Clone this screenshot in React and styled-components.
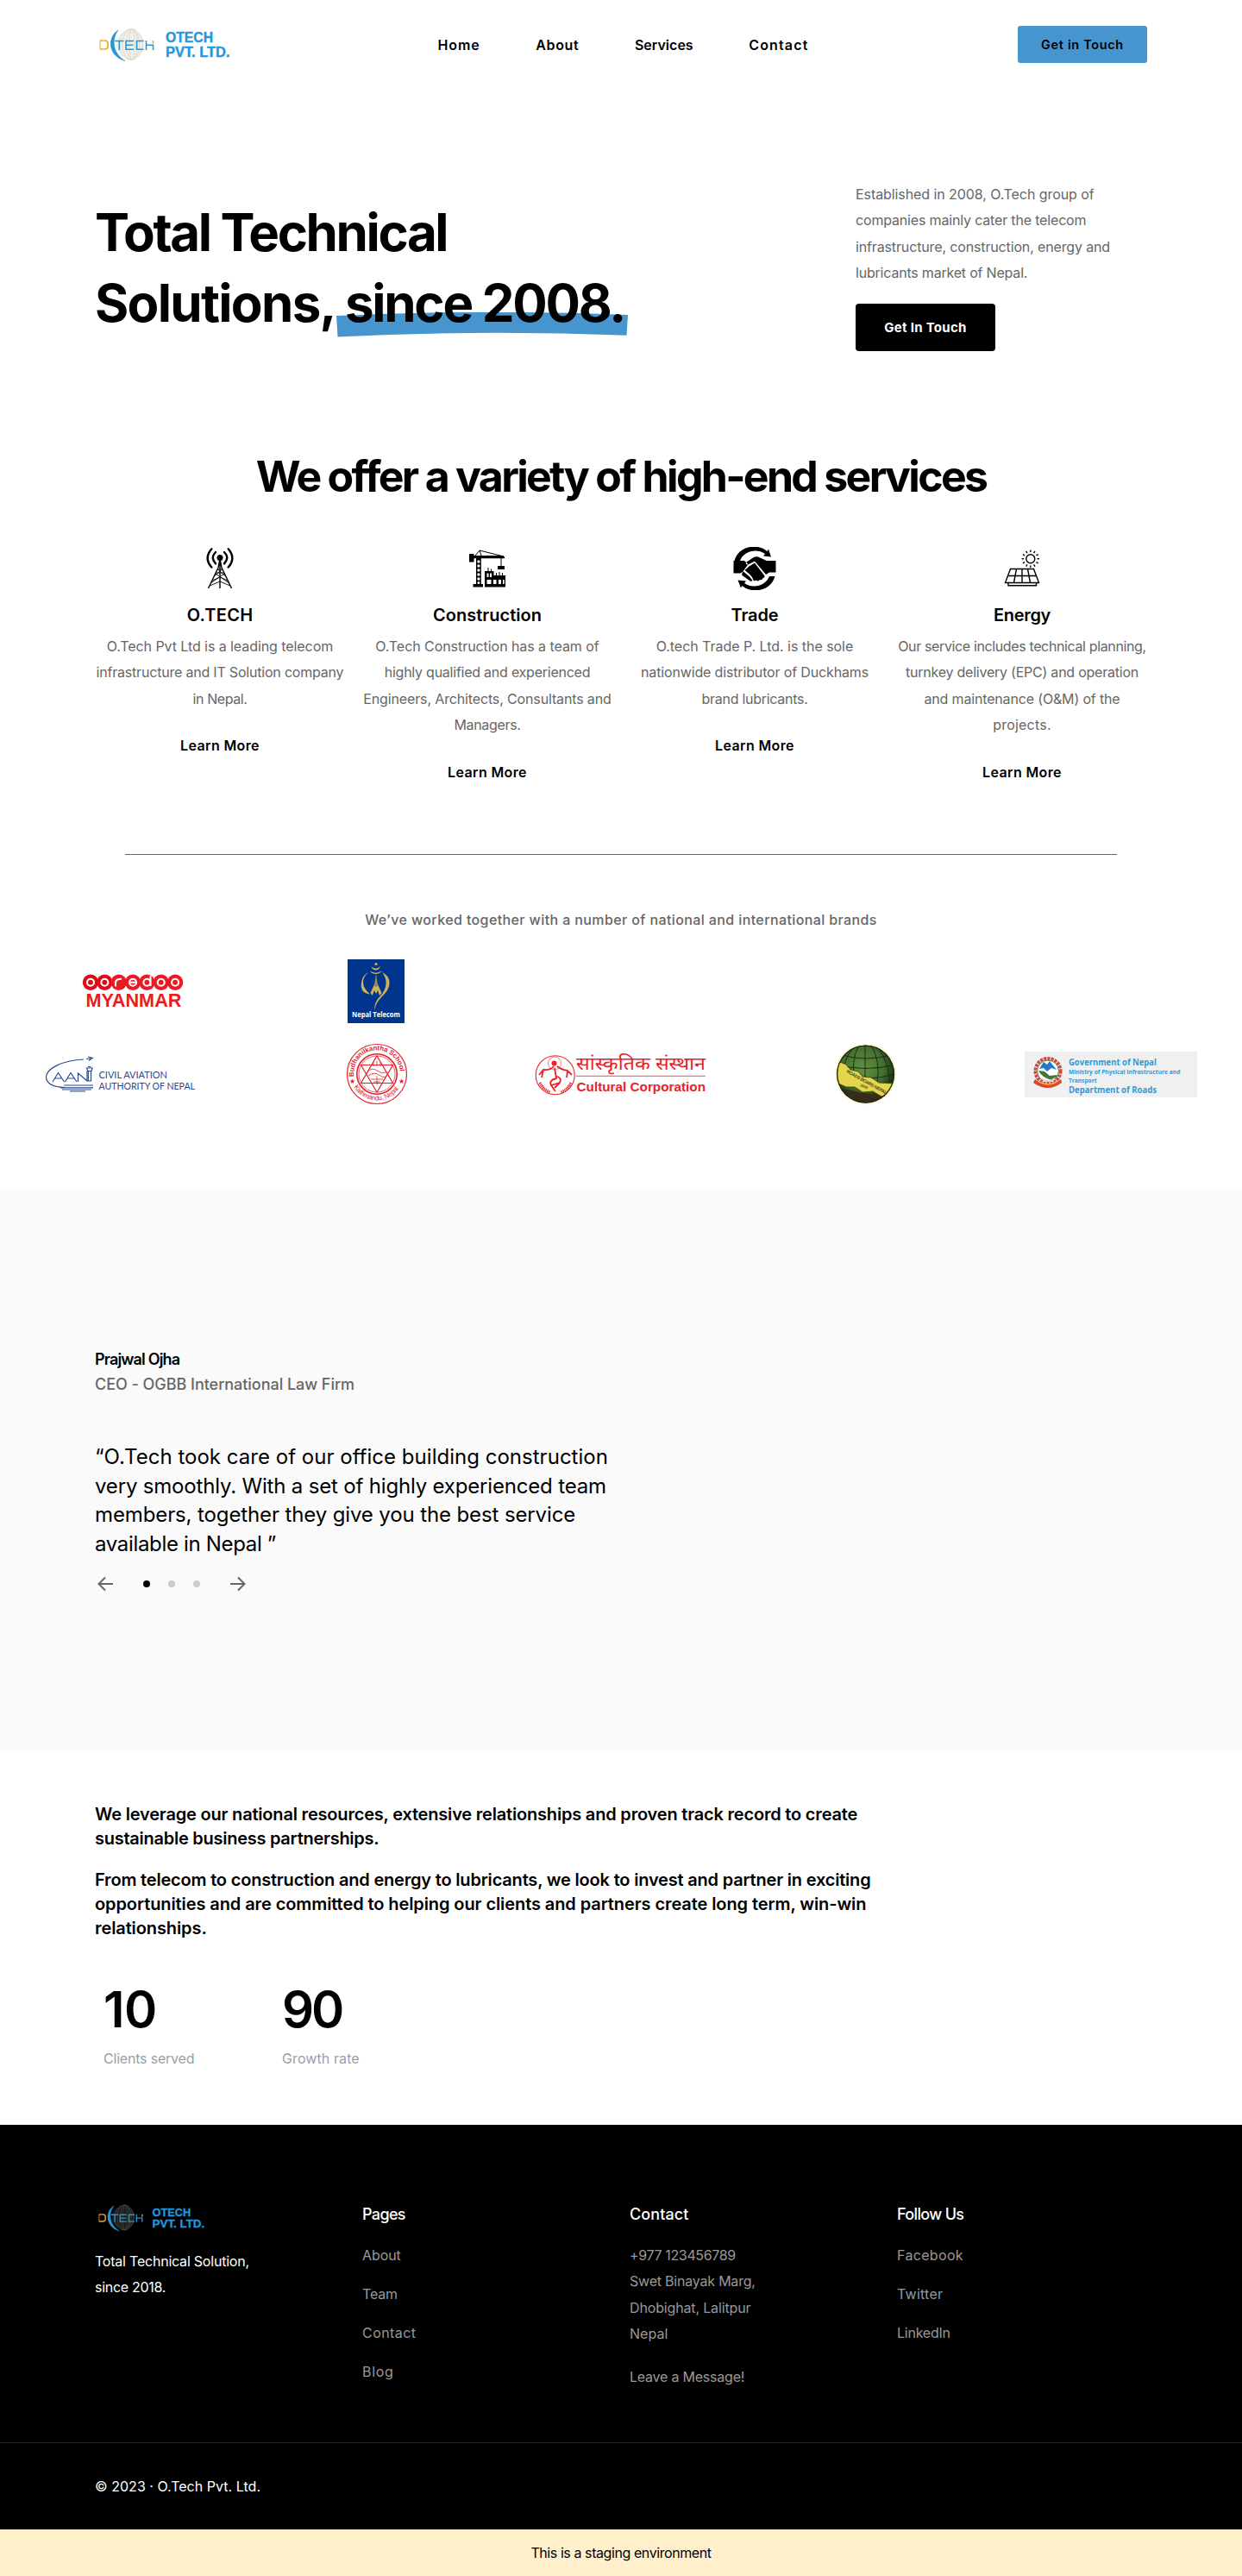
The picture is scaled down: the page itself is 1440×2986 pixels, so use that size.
import React from "react";
import styled, { createGlobalStyle } from "styled-components";

const GlobalStyle = createGlobalStyle`
  * { box-sizing: border-box; }
  body { margin: 0; background: #fff; color: #000; font-family: Inter, "Liberation Sans", sans-serif; }
  h1, h2, h3, p { margin: 0; font-weight: inherit; }
  a { color: inherit; text-decoration: none; }
`;

const BLUE = "#4795cf";

const Line = styled.span`
  display: block;
  white-space: nowrap;
  letter-spacing: ${(p) => p.$ls || 0}px;
`;

const Copy = styled.p`
  font-size: 16px;
  line-height: 30.4px;
  color: ${(p) => p.$color || "#666"};
`;

const Header = styled.header`
  height: 102px;
  padding: 0 110px;
  display: grid;
  grid-template-columns: 397.5px 1fr 150px;
  align-items: center;
`;

const Nav = styled.nav`
  display: flex;
  gap: 64.5px;
  padding-top: 1px;
  font-size: 16px;
  font-weight: 600;
`;

const TouchButton = styled.a`
  display: flex;
  align-items: center;
  justify-content: center;
  height: 43px;
  border-radius: 3px;
  background: ${BLUE};
  font-size: 14.5px;
  font-weight: 600;
  padding-top: 1px;
`;

const Hero = styled.section`
  height: 420px;
  padding: 108px 110px 0;
  display: grid;
  grid-template-columns: 882px 1fr;
  align-items: start;
`;

const HeroTitle = styled.h1`
  padding-top: 18px;
  font-size: 60px;
  line-height: 82px;
  font-weight: 700;
`;

const TitleRow = styled.span`
  display: flex;
  gap: 11px;
`;

const Marked = styled.span`
  position: relative;
  z-index: 0;
  letter-spacing: -2.27px;
`;

const Brush = styled.svg`
  position: absolute;
  z-index: -1;
  left: -10px;
  top: 52px;
  width: 338px;
  height: 30px;
`;

const DarkButton = styled.a`
  display: flex;
  align-items: center;
  justify-content: center;
  margin-top: 20px;
  width: 162px;
  height: 55px;
  border-radius: 4px;
  background: #000;
  color: #fff;
  font-size: 15px;
  font-weight: 700;
`;

const Services = styled.section`
  height: 468px;
`;

const SectionTitle = styled.h2`
  font-size: 50px;
  line-height: 60px;
  font-weight: 700;
  text-align: center;
`;

const ServiceGrid = styled.div`
  display: grid;
  grid-template-columns: repeat(4, 310px);
  padding: 52px 100px 0;
`;

const ServiceCard = styled.article`
  display: flex;
  flex-direction: column;
  align-items: center;
  text-align: center;
`;

const ServiceIcon = styled.svg`
  width: 50px;
  height: 50px;
`;

const ServiceName = styled.h3`
  margin-top: 15px;
  margin-bottom: 7px;
  font-size: 20px;
  line-height: 28px;
  font-weight: 600;
`;

const LearnMore = styled.a`
  margin-top: 24px;
  font-size: 16px;
  line-height: 30.4px;
  font-weight: 600;
  letter-spacing: 0.38px;
`;

const Brands = styled.section`
  height: 389px;
`;

const Divider = styled.hr`
  width: 1150px;
  height: 1px;
  margin: 0 auto;
  border: 0;
  background: #666;
`;

const BrandsLead = styled.p`
  margin-top: 60px;
  font-size: 16px;
  line-height: 30px;
  font-weight: 500;
  color: #666;
  text-align: center;
`;

const BrandGrid = styled.div`
  display: grid;
  grid-template-columns: repeat(5, 284px);
  grid-auto-rows: 96px;
  justify-content: center;
  place-items: center;
  padding-top: 20px;
`;

const BrandLogo = styled.svg`
  width: 200px;
  height: 80px;
  overflow: visible;
  grid-column: ${(p) => p.$col};
  grid-row: ${(p) => p.$row};
`;

const Testimonial = styled.section`
  height: 649px;
  padding: 183px 110px 0;
  background: #fafafa;
`;

const Person = styled.div`
  font-size: 18px;
  line-height: 28.5px;
  color: ${(p) => p.$color};
  font-weight: ${(p) => p.$weight};
`;

const Quote = styled.blockquote`
  margin: 53px 0 0;
  font-size: 24px;
  line-height: 33.6px;
`;

const Slider = styled.div`
  display: flex;
  align-items: center;
  margin-top: 18px;
  height: 24px;
`;

const ArrowIcon = styled.svg`
  width: 24px;
  height: 24px;
  fill: none;
  stroke: #666;
  stroke-width: 2;
`;

const Dots = styled.div`
  display: flex;
  gap: 20.8px;
  margin: 0 32px;
`;

const Dot = styled.i`
  width: 8px;
  height: 8px;
  border-radius: 50%;
  background: ${(p) => (p.$on ? "#000" : "#ccc")};
`;

const Mission = styled.section`
  height: 435px;
  padding: 60.7px 110px 0;
`;

const MissionText = styled.p`
  margin-bottom: 20px;
  font-size: 20px;
  line-height: 28px;
  font-weight: 600;
`;

const Stats = styled.div`
  display: grid;
  grid-template-columns: 207px 207px;
  padding: 24px 0 0 10px;
`;

const StatValue = styled.div`
  font-size: 58px;
  line-height: 72px;
  font-weight: 600;
`;

const StatLabel = styled.div`
  margin-top: 6px;
  font-size: 16px;
  line-height: 30px;
  color: #9b9ea6;
`;

const Footer = styled.footer`
  background: #000;
  color: #fff;
`;

const FooterGrid = styled.div`
  height: 368px;
  padding: 89.8px 110px 0;
  display: grid;
  grid-template-columns: repeat(4, 310px);
`;

const FooterHead = styled.h3`
  margin-bottom: 18px;
  font-size: 18px;
  line-height: 28px;
  font-weight: 500;
`;

const LinkList = styled.div`
  display: flex;
  flex-direction: column;
  gap: ${(p) => p.$gap}px;
`;

const FooterTag = styled.div`
  padding-top: 18px;
`;

const Copyright = styled.div`
  height: 101px;
  padding: 35px 110px 0;
  border-top: 1px solid #222;
`;

const Staging = styled.div`
  height: 54px;
  display: flex;
  align-items: center;
  justify-content: center;
  background: #fff0cb;
  font-size: 16px;
`;

const LogoSvg = styled.svg`
  display: block;
  width: ${(p) => p.$w}px;
  height: ${(p) => p.$h}px;
`;

function CompanyLogo({ w, h, dark }) {
  const lines = dark ? "#4c4a3c" : "#d5d5c3";
  return (
    <LogoSvg $w={w} $h={h} viewBox="0 0 160 43" preserveAspectRatio="none">
      <circle cx="41" cy="21.500" r="16.500" fill={dark ? "#191d1e" : "#f1f2ec"} />
      <g fill="none" stroke={lines} strokeWidth=".8">
        <ellipse cx="42" cy="21.500" rx="13.500" ry="18" />
        <ellipse cx="42" cy="21.500" rx="10" ry="18" />
        <ellipse cx="43" cy="21.500" rx="6.500" ry="18" />
        <ellipse cx="43" cy="21.500" rx="3" ry="18" />
      </g>
      <path d="M27 5C14 13 15 35 35 40.500C22 33 18 17 27 5Z" fill="#2796cc" stroke="#2796cc" strokeWidth=".6" />
      <path d="M6 17H11Q15 17 15 20V24Q15 27 11 27H6" fill="none" stroke="#f2a62a" strokeWidth="1.700" />
      <path d="M6 17V27" stroke="#f2a62a" strokeWidth="1" />
      <g fill="none" stroke="#2b95d6" strokeWidth="1.600">
        <path d="M23 17.500H33.500M28.300 17.500V28M45 17.500H36V27.200H45M36 22.300H44.500M56.500 17.500H48.500V27.200H56.500M59.500 17V28M59.500 22.300H67.500V28" />
        <path d="M67.500 17V20.500" stroke="#f2a62a" />
      </g>
      <g fill="#1f98dc" stroke="#1f98dc" strokeWidth=".4" fontFamily="Liberation Sans" fontWeight="700" fontSize="15.600">
        <text x="82" y="19.300" textLength="55" lengthAdjust="spacingAndGlyphs">OTECH</text>
        <text x="82" y="36" textLength="74.500" lengthAdjust="spacingAndGlyphs">PVT. LTD.</text>
      </g>
    </LogoSvg>
  );
}

function TowerIcon() {
  return (
    <ServiceIcon viewBox="0 0 50 50" fill="none" stroke="#000">
      <circle cx="25" cy="12.500" r="3.500" fill="#000" stroke="none" />
      <g strokeWidth="2.400" strokeLinecap="round">
        <path d="M15.300 2.300Q6 13 15.300 23.500M34.700 2.300Q44 13 34.700 23.500" />
        <path d="M20 6Q13.500 12.500 20 19.300M30 6Q36.500 12.500 30 19.300" />
      </g>
      <path d="M25 14L23 24L11.500 48M25 14L27 24L38.500 48M25 14V48" strokeWidth="1.400" />
      <path d="M22.500 26H27.500M20.500 30H29.500M22.500 26L31 33.500M27.500 26L19 33.500M20 31L35 41.500M30 31L15 41.500M16 39L25 35L34 39M13 45L25 40L37 45" strokeWidth=".9" />
    </ServiceIcon>
  );
}

function CraneIcon() {
  return (
    <ServiceIcon viewBox="0 0 50 50" fill="#000">
      <path d="M4 8H9.500V17.500H4ZM8 10H42.500L45 11.500V13.200H8ZM37 22H45V26H37ZM8.500 43H20V46.500H8.500Z" />
      <path d="M11 10L16 4L44 11M16 4L18 10M41 13V22" fill="none" stroke="#000" strokeWidth="1" />
      <rect x="12" y="13" width="5.800" height="31" />
      <g fill="#fff">
        <circle cx="14.900" cy="17" r="1.700" /><circle cx="14.900" cy="22" r="1.700" /><circle cx="14.900" cy="27" r="1.700" />
        <circle cx="14.900" cy="32" r="1.700" /><circle cx="14.900" cy="37" r="1.700" /><circle cx="14.900" cy="41.700" r="1.400" />
      </g>
      <path d="M22 28H32.500V33H46V46.500H22ZM25.500 24H26.500V28H25.500ZM29 25.500H30V28H29ZM35 30H36V33H35ZM38.500 29H39.500V33H38.500ZM42 30H43V33H42Z" />
      <path d="M24.500 30.500H26.500V35H24.500ZM28 30.500H30V35H28ZM24.500 38H29.500V43H24.500ZM32 38H35.500V43H32ZM38 38H41V43H38ZM43 38H44.700V43H43Z" fill="#fff" />
    </ServiceIcon>
  );
}

function TradeIcon() {
  return (
    <ServiceIcon viewBox="0 0 50 50" fill="#000">
      <path d="M1.500 16C6-1 28-5 39.500 5L41 2.500L44 11.500L35 10.500L37 8C27 1 12 5 8 16Z" />
      <path d="M48.500 34C44 51 22 55 10.500 45L9 47.500L5.500 38.500L15 39.500L13 42C23 49 38 45 42 34Z" />
      <path d="M0.500 16H13L17.500 20L11 29L8 30.500H0.500ZM49.500 16H39L29 11.500Q26 10.500 23 12.500L15 18Q14 20.500 17.500 20.500L25 16.500L38 32L42 29.500H49.500Z" />
      <path d="M18.500 22.500L25 18.500L36.500 33.500Q37 36 34.500 36Q33.500 39 31 38Q29 40.500 26.500 38.500L24 39.500L22 35L19.500 32L16 29L13.500 27Z" />
      <path d="M12 28.500L19 34.500L22.500 39L20.500 40L10.500 33Q9.500 30.500 12 28.500Z" />
    </ServiceIcon>
  );
}

function SolarIcon() {
  const rays = Array.from({ length: 12 }, (_, i) => i * 30);
  return (
    <ServiceIcon viewBox="0 0 50 50" fill="none" stroke="#000" strokeWidth="1.400">
      <circle cx="34.800" cy="13.700" r="5" />
      {rays.map((r) => (
        <path key={r} d="M34.800 3.500V6" transform={`rotate(${r} 34.8 13.7)`} />
      ))}
      <path d="M11.500 25.500H38.500L44.500 41.500H5.500ZM8.700 33.500H41.300M18.500 25.500L15.500 41.500M25 25.500V41.500M31.500 25.500L34.500 41.500M9 42V44.700H41.500V42" />
    </ServiceIcon>
  );
}

function Ooredoo() {
  return (
    <BrandLogo $col={1} $row={1} viewBox="0 0 200 80">
      {[0, 1, 2, 3, 4, 5, 6].map((i) => (
        <circle key={i} cx={53 + i * 16.35} cy="29.800" r="9.200" fill={i < 2 ? "#dc0d18" : "#ec1a24"} />
      ))}
      <g fill="none" stroke="#fff" strokeWidth="2.100">
        {[0, 1, 3, 4, 5, 6].map((i) => (
          <circle key={i} cx={53 + i * 16.35} cy="29.800" r="4" />
        ))}
        <path d="M82 34.500V30Q82 25.800 89 25.800M98.500 29.800H105.500M122.500 22V34" />
      </g>
      <text x="47.400" y="57.700" fill="#ec1a24" fontFamily="Liberation Sans" fontWeight="700" fontSize="22.500" textLength="111" lengthAdjust="spacingAndGlyphs">MYANMAR</text>
    </BrandLogo>
  );
}

function Telecom() {
  return (
    <BrandLogo $col={2} $row={1} viewBox="0 0 200 80">
      <rect x="67" y="3" width="66" height="74" fill="#00358d" />
      <g fill="#d2b15a">
        <circle cx="100" cy="8.500" r="1.600" />
        <path d="M94.500 11.500Q100 16 105 11Q103 16 99 15.500Q95.500 15 94.500 11.500ZM93 16.500Q100 21 107 16Q104 20.500 99 20Q94.500 19.500 93 16.500Z" />
        <path d="M91 18Q78 30 93 43.500Q81 42 83 30Q84.500 21 91 18ZM107 18Q116 22 115.500 31Q115 39 107 46Q99 54 98.500 62Q97 53 105.500 45Q117 31 107 18Z" />
        <path d="M100 20L101.500 31L106.500 42L104 45L102 39L100 43L98 39L95.500 45L93.500 42L98.500 31Z" />
      </g>
      <path d="M100 22V35M97 33H103" stroke="#687047" strokeWidth="1" />
      <text x="72" y="69.700" fill="#fff" fontFamily="Open Sans" fontWeight="700" fontSize="8.600" textLength="56" lengthAdjust="spacingAndGlyphs">Nepal Telecom</text>
    </BrandLogo>
  );
}

function Aviation() {
  return (
    <BrandLogo $col={1} $row={2} viewBox="0 0 200 80">
      <g fill="none" stroke="#27488f" strokeWidth="1.200">
        <path d="M45 23C20 24 1 34 1.500 44C2 51 10 55 23 55.500" />
        <path d="M48 22.500L56 21.500L50 20M54 22L51 24.500" />
        <path d="M9 49L15.500 38.500L22.500 49M12 45H20M23.500 49L30 38.500L37 49M26.500 45H34M38.500 49V39L49 48V36" />
        <path d="M48.500 33H55L54 36.500H50ZM50.300 36.500V48H53.500V36.500M50 31.500H53.500" />
        <path d="M22 53H56M18 55.800H56M20 58H54M29 60H47" />
      </g>
      <g fill="#27488f" fontFamily="Lato" fontSize="11.600">
        <text x="62.500" y="45" textLength="79.500" lengthAdjust="spacingAndGlyphs">CIVIL AVIATION</text>
        <text x="62.500" y="57.700" textLength="111.500" lengthAdjust="spacingAndGlyphs">AUTHORITY OF NEPAL</text>
      </g>
    </BrandLogo>
  );
}

function School() {
  return (
    <BrandLogo $col={2} $row={2} viewBox="0 0 200 80">
      <defs>
        <path id="school-top" d="M74.500 43A26.800 26.800 0 1 1 127.500 43" />
        <path id="school-bottom" d="M73 52A30.500 30.500 0 0 0 129 52" />
      </defs>
      <g fill="none" stroke="#e4202b" strokeWidth="1">
        <circle cx="101" cy="40" r="34.500" strokeWidth="1.200" />
        <circle cx="101" cy="40" r="23.200" strokeWidth="1.600" />
        <circle cx="101" cy="40" r="21" strokeWidth=".7" />
        <path d="M101 19L119.500 50.500H82.500ZM101 61L82.500 29.500H119.500Z" strokeWidth="1.200" />
        <path d="M90 37Q96 32 101 36T113 38M91 42Q98 37 103 41T112 43M97 31V26M101 31V25M105 31V26M94 46H108M97 49H105M101 42V52" strokeWidth=".8" />
      </g>
      <g fill="#e4202b" fontFamily="Liberation Sans" fontSize="7.800">
        <text fontWeight="700"><textPath href="#school-top" textLength="86">Budhanilkantha School</textPath></text>
        <text><textPath href="#school-bottom" startOffset="3" textLength="62">Kathmandu, Nepal</textPath></text>
        <text x="69" y="51" fontFamily="DejaVu Sans" fontSize="8">★</text>
        <text x="126" y="51" fontFamily="DejaVu Sans" fontSize="8">★</text>
      </g>
    </BrandLogo>
  );
}

function Cultural() {
  return (
    <BrandLogo $col={3} $row={2} viewBox="0 0 200 80">
      <g fill="none" stroke="#e8222a">
        <circle cx="23.700" cy="41.300" r="22.500" strokeWidth="1.100" />
        <circle cx="23" cy="27.500" r="7.500" strokeWidth=".6" />
        <path d="M22 31Q18 36 10 35L5 41M26 31Q31 35 38 36L43 41M10 35L8 44M38 36L37 44M23 33L25 45Q16 47 19 53L29 50Q32 44 24 42M19 53L24 60M29 50L23 56" strokeWidth="1.800" />
        <path d="M6 50Q10 58 18 61M42 50Q38 58 30 61" strokeWidth="3" strokeDasharray="1.300 .8" />
        <path d="M48 42.300H198" strokeWidth=".8" />
      </g>
      <circle cx="22.500" cy="27.500" r="3" fill="#e8222a" />
      <g fill="#e8222a">
        <text x="48" y="34.500" fontFamily="Noto Sans Devanagari, Noto Sans, sans-serif" fontSize="21" textLength="150" lengthAdjust="spacingAndGlyphs">सांस्कृतिक संस्थान</text>
        <text x="48.500" y="60" fontFamily="Liberation Sans" fontWeight="700" fontSize="15.500" textLength="149.500" lengthAdjust="spacingAndGlyphs">Cultural Corporation</text>
      </g>
    </BrandLogo>
  );
}

function RoadsBoard() {
  return (
    <BrandLogo $col={4} $row={2} viewBox="0 0 200 80">
      <defs>
        <radialGradient id="globe" cx=".45" cy=".4" r=".6">
          <stop offset="0" stopColor="#64913f" />
          <stop offset=".6" stopColor="#44702f" />
          <stop offset="1" stopColor="#14240f" />
        </radialGradient>
        <clipPath id="globe-clip"><circle cx="99.600" cy="40" r="33.500" /></clipPath>
      </defs>
      <circle cx="99.600" cy="40" r="35.500" fill="#f7f5cf" />
      <circle cx="99.600" cy="40" r="33.500" fill="url(#globe)" />
      <g clipPath="url(#globe-clip)">
        <g fill="none" stroke="#1a2d15" strokeWidth="1">
          <path d="M99 6V55M92 6Q82 25 87 50M106 6Q117 25 113 50M86 8Q70 28 74 50M113 8Q130 30 127 60M72 18Q100 26 128 18M66 29Q100 38 134 29M66 40Q100 50 134 40" />
        </g>
        <path d="M64 54Q80 59 97 62T136 56V76H64Z" fill="#352c1c" />
        <path d="M66 32L70 26L77 29L82 35L91 37L96 43L106 44L115 50L133 51L134 57L128 64L118 66L108 60L96 61L87 55L77 55L66 50Z" fill="#e3d64c" stroke="#3d391a" strokeWidth=".8" />
        <circle cx="99.600" cy="40" r="33" fill="none" stroke="#1d2812" strokeWidth="1.500" />
      </g>
      <g fill="#4d4820" fontFamily="Liberation Sans" fontWeight="700">
        <text fontSize="5.200" transform="translate(77 38) rotate(29)" textLength="53">ROADS BOARD NEPAL</text>
        <text fontSize="4" transform="translate(93 54) rotate(22)">2058</text>
      </g>
    </BrandLogo>
  );
}

function Government() {
  return (
    <BrandLogo $col={5} $row={2} viewBox="0 0 200 80">
      <rect x="0" y="14" width="200" height="53" fill="#f0f0f0" />
      <circle cx="27" cy="36.500" r="14.500" fill="#fff" stroke="#c94a3e" strokeWidth="4" strokeDasharray="3.200 1" />
      <circle cx="27" cy="36.500" r="12.400" fill="#fff" stroke="#54833e" strokeWidth="1" />
      <path d="M17 34L22 26L26 29L29 25L37 35L31 33L26 37L22 33Z" fill="#2678c9" />
      <path d="M16 36L23 37L29 42L38 41Q36 47 31 47Q20 44 16 36Z" fill="#43743a" />
      <path d="M19 43Q27 51 36 43L33 49H22Z" fill="#eed5c8" />
      <path d="M12 46Q27 59 42 46L43 50Q27 62 10 50Z" fill="#d9452f" />
      <path d="M17 49Q27 55 37 49" fill="none" stroke="#e9ad43" strokeWidth="1.500" />
      <g fill="#319ada" fontFamily="Open Sans" fontWeight="700">
        <text x="51" y="30" fontSize="10.600" textLength="102" lengthAdjust="spacingAndGlyphs">Government of Nepal</text>
        <text x="51" y="40.300" fontSize="7" textLength="129.500" lengthAdjust="spacingAndGlyphs">Ministry of Physical Infrastructure and</text>
        <text x="51" y="49.500" fontSize="7" textLength="32.500" lengthAdjust="spacingAndGlyphs">Transport</text>
        <text x="51" y="62" fontSize="10.600" textLength="102" lengthAdjust="spacingAndGlyphs">Department of Roads</text>
      </g>
    </BrandLogo>
  );
}

const nav = [["Home", 0.91], ["About", 0.68], ["Services", 0.02], ["Contact", 1.16]];

const services = [
  { Icon: TowerIcon, name: ["O.TECH", 0.25], text: [["O.Tech Pvt Ltd is a leading telecom", -0.07], ["infrastructure and IT Solution company", -0.2], ["in Nepal.", -0.42]] },
  { Icon: CraneIcon, name: ["Construction", 0.02], text: [["O.Tech Construction has a team of", -0.06], ["highly qualified and experienced", -0.24], ["Engineers, Architects, Consultants and", -0.14], ["Managers.", -0.34]] },
  { Icon: TradeIcon, name: ["Trade", -0.12], text: [["O.tech Trade P. Ltd. is the sole", -0.04], ["nationwide distributor of Duckhams", -0.15], ["brand lubricants.", -0.28]] },
  { Icon: SolarIcon, name: ["Energy", -0.3], text: [["Our service includes technical planning,", -0.37], ["turnkey delivery (EPC) and operation", -0.23], ["and maintenance (O&M) of the", -0.16], ["projects.", 0.2]] },
];

const Lines = ({ rows }) => rows.map(([t, ls]) => <Line key={t} $ls={ls}>{t}</Line>);

export default function App() {
  return (
    <>
      <GlobalStyle />
      <Header>
        <CompanyLogo w={160} h={43} />
        <Nav>
          {nav.map(([t, ls]) => <Line as="a" key={t} $ls={ls}>{t}</Line>)}
        </Nav>
        <TouchButton><Line $ls={0.65}>Get in Touch</Line></TouchButton>
      </Header>

      <Hero>
        <HeroTitle>
          <Line $ls={-2.39}>Total Technical</Line>
          <TitleRow>
            <Line $ls={-1.68}>Solutions,</Line>
            <Marked>
              <Brush viewBox="0 0 338 30">
                <path d="M0 4Q169 -4 338 3L336.500 26.800Q169 20 1.500 28.500Z" fill={BLUE} />
              </Brush>
              since 2008.
            </Marked>
          </TitleRow>
        </HeroTitle>
        <div>
          <Copy>
            <Lines rows={[["Established in 2008, O.Tech group of", -0.08], ["companies mainly cater the telecom", -0.17], ["infrastructure, construction, energy and", -0.14], ["lubricants market of Nepal.", -0.2]]} />
          </Copy>
          <DarkButton><Line $ls={0.29}>Get In Touch</Line></DarkButton>
        </div>
      </Hero>

      <Services>
        <SectionTitle><Line $ls={-2.71}>We offer a variety of high-end services</Line></SectionTitle>
        <ServiceGrid>
          {services.map(({ Icon, name, text }) => (
            <ServiceCard key={name[0]}>
              <Icon />
              <ServiceName><Line $ls={name[1]}>{name[0]}</Line></ServiceName>
              <Copy><Lines rows={text} /></Copy>
              <LearnMore>Learn More</LearnMore>
            </ServiceCard>
          ))}
        </ServiceGrid>
      </Services>

      <Brands>
        <Divider />
        <BrandsLead><Line $ls={0.39}>We’ve worked together with a number of national and international brands</Line></BrandsLead>
        <BrandGrid>
          <Ooredoo />
          <Telecom />
          <Aviation />
          <School />
          <Cultural />
          <RoadsBoard />
          <Government />
        </BrandGrid>
      </Brands>

      <Testimonial>
        <Person $color="#000" $weight={600}><Line $ls={-0.83}>Prajwal Ojha</Line></Person>
        <Person $color="#666" $weight={500}><Line $ls={-0.04}>CEO - OGBB International Law Firm</Line></Person>
        <Quote>
          <Lines rows={[["“O.Tech took care of our office building construction", 0.02], ["very smoothly. With a set of highly experienced team", -0.18], ["members, together they give you the best service", -0.12], ["available in Nepal ”", -0.33]]} />
        </Quote>
        <Slider>
          <ArrowIcon viewBox="0 0 24 24"><path d="M21 12H4.500M12 4.500L4.500 12L12 19.500" /></ArrowIcon>
          <Dots><Dot $on /><Dot /><Dot /></Dots>
          <ArrowIcon viewBox="0 0 24 24"><path d="M3 12H19.500M12 4.500L19.500 12L12 19.500" /></ArrowIcon>
        </Slider>
      </Testimonial>

      <Mission>
        <MissionText>
          <Lines rows={[["We leverage our national resources, extensive relationships and proven track record to create", -0.19], ["sustainable business partnerships.", -0.26]]} />
        </MissionText>
        <MissionText>
          <Lines rows={[["From telecom to construction and energy to lubricants, we look to invest and partner in exciting", -0.19], ["opportunities and are committed to helping our clients and partners create long term, win-win", -0.09], ["relationships.", -0.1]]} />
        </MissionText>
        <Stats>
          <div>
            <StatValue><Line $ls={-0.5}>10</Line></StatValue>
            <StatLabel><Line $ls={-0.2}>Clients served</Line></StatLabel>
          </div>
          <div>
            <StatValue><Line $ls={-3}>90</Line></StatValue>
            <StatLabel><Line $ls={0.1}>Growth rate</Line></StatLabel>
          </div>
        </Stats>
      </Mission>

      <Footer>
        <FooterGrid>
          <div>
            <CompanyLogo w={130} h={35} dark />
            <FooterTag>
              <Copy $color="#fff"><Lines rows={[["Total Technical Solution,", -0.22], ["since 2018.", -0.29]]} /></Copy>
            </FooterTag>
          </div>
          <div>
            <FooterHead><Line $ls={-0.65}>Pages</Line></FooterHead>
            <LinkList $gap={14.8}>
              {[["About", -0.07], ["Team", -0.18], ["Contact", 0.45], ["Blog", 0.69]].map(([t, ls]) => (
                <Copy key={t} $color="#999"><Line $ls={ls}>{t}</Line></Copy>
              ))}
            </LinkList>
          </div>
          <div>
            <FooterHead><Line $ls={0.08}>Contact</Line></FooterHead>
            <LinkList $gap={19.5}>
              <Copy $color="#999">
                <Lines rows={[["+977 123456789", -0.36], ["Swet Binayak Marg,", -0.21], ["Dhobighat, Lalitpur", -0.15], ["Nepal", 0.07]]} />
              </Copy>
              <Copy $color="#999"><Line $ls={-0.22}>Leave a Message!</Line></Copy>
            </LinkList>
          </div>
          <div>
            <FooterHead><Line $ls={-0.65}>Follow Us</Line></FooterHead>
            <LinkList $gap={14.8}>
              {[["Facebook", 0.33], ["Twitter", 0.24], ["LinkedIn", -0.25]].map(([t, ls]) => (
                <Copy key={t} $color="#999"><Line $ls={ls}>{t}</Line></Copy>
              ))}
            </LinkList>
          </div>
        </FooterGrid>
        <Copyright>
          <Copy $color="#fff"><Line $ls={0.03}>© 2023 · O.Tech Pvt. Ltd.</Line></Copy>
        </Copyright>
      </Footer>
      <Staging><Line $ls={-0.42}>This is a staging environment</Line></Staging>
    </>
  );
}
